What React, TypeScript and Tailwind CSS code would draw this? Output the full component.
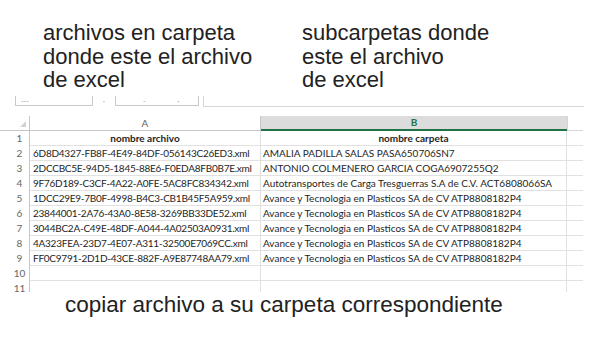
import React from "react";

const rows: [string, string][] = [
  ["6D8D4327-FB8F-4E49-84DF-056143C26ED3.xml", "AMALIA PADILLA SALAS PASA650706SN7"],
  ["2DCCBC5E-94D5-1845-88E6-F0EDA8FB0B7E.xml", "ANTONIO COLMENERO GARCIA COGA6907255Q2"],
  ["9F76D189-C3CF-4A22-A0FE-5AC8FC834342.xml", "Autotransportes de Carga Tresguerras S.A de C.V. ACT6808066SA"],
  ["1DCC29E9-7B0F-4998-B4C3-CB1B45F5A959.xml", "Avance y Tecnologia en Plasticos SA de CV ATP8808182P4"],
  ["23844001-2A76-43A0-8E58-3269BB33DE52.xml", "Avance y Tecnologia en Plasticos SA de CV ATP8808182P4"],
  ["3044BC2A-C49E-48DF-A044-4A02503A0931.xml", "Avance y Tecnologia en Plasticos SA de CV ATP8808182P4"],
  ["4A323FEA-23D7-4E07-A311-32500E7069CC.xml", "Avance y Tecnologia en Plasticos SA de CV ATP8808182P4"],
  ["FF0C9791-2D1D-43CE-882F-A9E87748AA79.xml", "Avance y Tecnologia en Plasticos SA de CV ATP8808182P4"],
  ["", ""],
  ["", ""],
];

const sans = { fontFamily: '"Liberation Sans", Arial, sans-serif' };
const grid = { fontFamily: 'Lato, "Open Sans", sans-serif' };

export default function App() {
  return (
    <div className="w-[600px] h-[341px] bg-white overflow-hidden text-[#222]">
      {/* titles */}
      <div className="flex h-[96px] pt-[21px] text-[22px] leading-[23.5px]" style={sans}>
        <div className="w-[302px] pl-[43px]">
          archivos en carpeta
          <br />
          donde este el archivo
          <br />
          de excel
        </div>
        <div>
          subcarpetas donde
          <br />
          este el archivo
          <br />
          de excel
        </div>
      </div>

      {/* formula bar remnants */}
      <div className="flex h-[11px] items-start text-[7px] leading-[7px] text-[#9a9a9a]" style={grid}>
        <div className="ml-[15px] w-[78px] h-[10px] border-l border-r border-b border-[#c9c9c9] pl-[5px] pt-[2px]">
          ---
        </div>
        <div className="w-[22px] flex justify-center pt-[2px]">·</div>
        <div className="w-[84px] h-[10px] border-l border-r border-b border-[#c9c9c9] flex pt-[2px]">
          <span className="ml-[27px]">-</span>
          <span className="ml-[32px]">·</span>
        </div>
        <div className="ml-[4px] w-[381px] h-[11px] border-l border-b border-[#d6d6d6]" />
      </div>

      {/* grid */}
      <div className="mt-[9px] h-[176px] overflow-hidden text-[10px] text-[#1e1e1e]" style={grid}>
        {/* column header row */}
        <div className="flex h-[15px]">
          <div className="w-[30px] h-[15px] border-r border-b border-[#c6c6c6] flex items-end justify-end pr-[3px] pb-[3px]">
            <svg width="6" height="6" viewBox="0 0 6 6">
              <polygon points="6,0 6,6 0,6" fill="#d2d2d2" />
            </svg>
          </div>
          <div className="w-[231px] h-[15px] border-r border-b border-[#c6c6c6] flex items-center justify-center text-[#666]">
            A
          </div>
          <div className="w-[306px] h-[15px] bg-[#dcdcdc] border-b-2 border-[#217346] flex items-center justify-center text-[#217346] font-bold">
            B
          </div>
          <div className="w-[16px] h-[15px] border-l border-b border-[#d6d6d6]" />
        </div>
        {/* header row 1 */}
        <div className="flex h-[15px]">
          <div className="w-[30px] border-r border-[#c6c6c6] pl-[10px] flex items-center justify-center text-[#666]">1</div>
          <div className="w-[231px] border-r border-b border-[#e1e1e1] flex items-center justify-center font-bold">
            nombre archivo
          </div>
          <div className="w-[306px] border-r border-b border-[#e1e1e1] flex items-center justify-center font-bold">
            nombre carpeta
          </div>
          <div className="w-[16px] border-b border-[#e1e1e1]" />
        </div>
        {rows.map(([a, b], i) => (
          <div key={i} className="flex h-[15px]">
            <div className="w-[30px] border-r border-[#c6c6c6] pl-[10px] flex items-center justify-center text-[#666]">
              {i + 2}
            </div>
            <div className="w-[231px] border-r border-b border-[#e1e1e1] flex items-center pl-[3px] whitespace-nowrap overflow-hidden tracking-[-0.25px]">
              {a}
            </div>
            <div className="w-[306px] border-r border-b border-[#e1e1e1] flex items-center pl-[2px] whitespace-nowrap overflow-hidden">
              {b}
            </div>
            <div className="w-[16px] border-b border-[#e1e1e1]" />
          </div>
        ))}
      </div>

      {/* bottom caption */}
      <div className="pl-[65px] text-[22.5px] leading-[26px]" style={sans}>
        copiar archivo a su carpeta correspondiente
      </div>
    </div>
  );
}
